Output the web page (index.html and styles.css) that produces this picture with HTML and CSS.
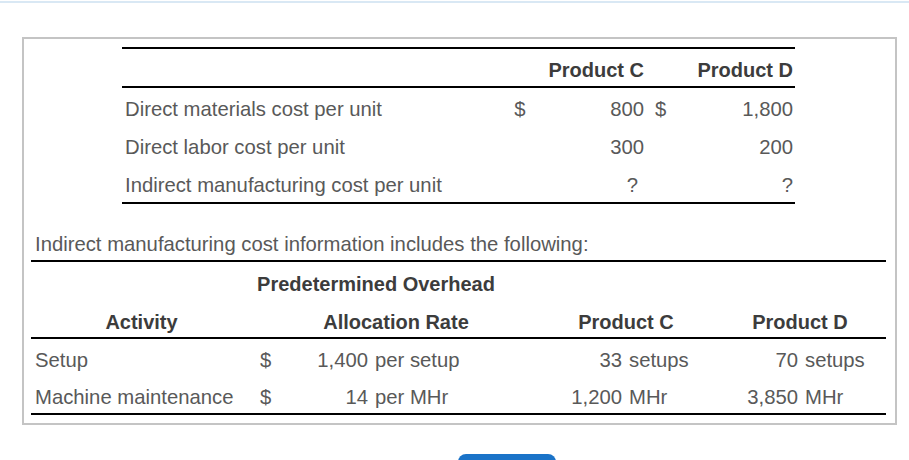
FILE: index.html
```html
<!DOCTYPE html>
<html>
<head>
<meta charset="utf-8">
<link rel="stylesheet" href="styles.css">
</head>
<body>
<div class="topline"></div>
<div class="box">
  <table class="t1">
    <colgroup>
      <col style="width:383px"><col style="width:30px"><col style="width:111px"><col style="width:30px"><col style="width:119px">
    </colgroup>
    <thead>
      <tr class="head">
        <th></th><th></th><th class="r">Product C</th><th></th><th class="r">Product D</th>
      </tr>
    </thead>
    <tbody>
      <tr><td class="lbl">Direct materials cost per unit</td><td class="dol">$</td><td class="r">800</td><td class="dol2">$</td><td class="r">1,800</td></tr>
      <tr><td class="lbl">Direct labor cost per unit</td><td></td><td class="r">300</td><td></td><td class="r">200</td></tr>
      <tr class="last"><td class="lbl">Indirect manufacturing cost per unit</td><td></td><td class="r q">?</td><td></td><td class="r">?</td></tr>
    </tbody>
  </table>

  <p class="intro">Indirect manufacturing cost information includes the following:</p>

  <table class="t2">
    <colgroup>
      <col style="width:219px"><col style="width:32px"><col style="width:88px"><col style="width:148px"><col style="width:106px"><col style="width:98px"><col style="width:78px"><col style="width:86px">
    </colgroup>
    <thead>
      <tr class="h1">
        <th></th><th colspan="3" class="pre">Predetermined Overhead</th><th colspan="2"></th><th colspan="2"></th>
      </tr>
      <tr class="h2">
        <th class="act">Activity</th><th></th><th colspan="2" class="rate">Allocation Rate</th><th colspan="2" class="pc">Product C</th><th colspan="2" class="pd">Product D</th>
      </tr>
    </thead>
    <tbody>
      <tr><td class="lbl">Setup</td><td class="dol">$</td><td class="num">1,400</td><td class="unit">per setup</td><td class="num">33</td><td class="unit">setups</td><td class="num">70</td><td class="unit">setups</td></tr>
      <tr class="last"><td class="lbl">Machine maintenance</td><td class="dol">$</td><td class="num">14</td><td class="unit">per MHr</td><td class="num">1,200</td><td class="unit">MHr</td><td class="num">3,850</td><td class="unit">MHr</td></tr>
    </tbody>
  </table>
</div>
<div class="actions"><div class="btn"></div></div>
</body>
</html>
```

FILE: styles.css
```css
html, body {
  margin: 0;
  padding: 0;
  background: #fff;
}
body {
  font-family: "Liberation Sans", Arial, sans-serif;
  font-size: 20px;
  color: #595959;
  overflow: hidden;
}
.topline {
  margin-top: 1px;
  height: 2px;
  background: #d9e8f4;
}
.box {
  margin: 34px 0 0 22px;
  width: 871px;
  border: 2px solid #c4c4c4;
  padding: 8px 0 8px 0;
}
table {
  border-collapse: collapse;
  table-layout: fixed;
}
th, td {
  padding: 4px 0 0 0;
  line-height: 22px;
  white-space: nowrap;
  vertical-align: middle;
}
td {
  font-size: 20.3px;
}
th {
  font-weight: bold;
  color: #3c3c3c;
}
.r { text-align: right; padding-right: 2px; }
.lbl { text-align: left; padding-left: 3px; }

.t1 {
  margin-left: 98px;
  width: 673px;
  border-top: 2px solid #000;
  border-bottom: 2px solid #000;
}
.t1 .head th { height: 33px; border-bottom: 2px solid #000; }
.t1 td { height: 34px; }
.t1 .dol { text-align: center; }
.t1 .dol2 { text-align: left; padding-left: 9px; }
.t1 .q { padding-right: 8px; }

.intro {
  margin: 28px 0 0 11px;
  line-height: 24px;
  font-size: 20.3px;
}

.t2 {
  margin-left: 7px;
  margin-top: 4px;
  width: 855px;
  border-top: 2px solid #000;
  border-bottom: 2px solid #000;
}
.t2 .h1 th { height: 36px; }
.t2 .h2 th { height: 31px; border-bottom: 2px solid #000; }
.t2 .pre { text-align: center; padding-right: 16px; }
.t2 .act { text-align: center; padding-left: 2px; }
.t2 .rate { text-align: center; padding-right: 8px; }
.t2 .pc { text-align: center; padding-left: 12px; }
.t2 .pd { text-align: center; padding-right: 8px; }
.t2 td { height: 33px; }
.t2 .lbl { padding-left: 4px; }
.t2 .dol { text-align: left; padding-left: 10px; }
.t2 .num { text-align: right; padding-right: 2px; }
.t2 .unit { text-align: left; padding-left: 5px; }

.actions {
  display: flex;
  justify-content: center;
  padding-top: 29px;
  padding-left: 105px;
}
.btn {
  width: 98px;
  height: 36px;
  border-radius: 8px;
  background: #1a73c8;
}
```
